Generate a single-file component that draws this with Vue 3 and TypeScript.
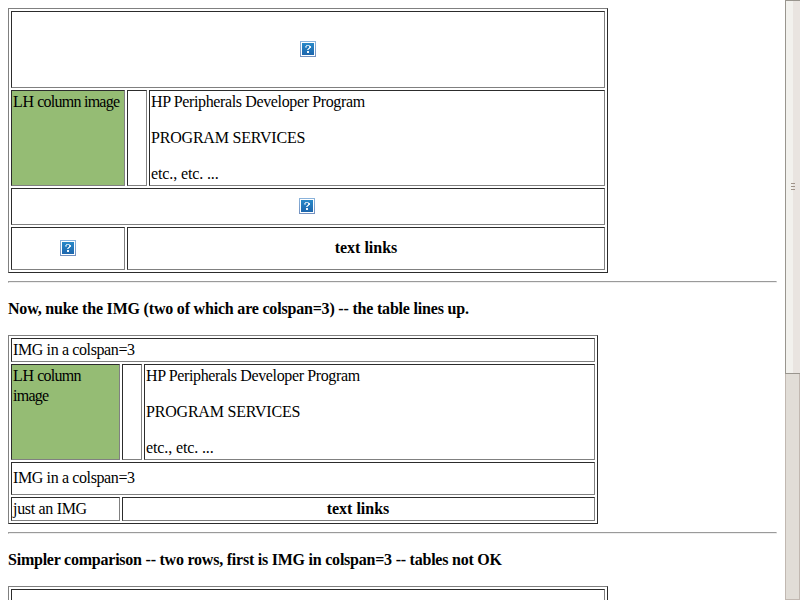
<script setup lang="ts">
import { defineComponent, h } from 'vue'

const MissingImage = defineComponent({
  props: { uid: { type: String, required: true } },
  setup(props) {
    const px = (x: number, y: number, w: number, ht: number, o: number) =>
      h('rect', { x, y, width: w, height: ht, fill: '#fff', 'fill-opacity': o })
    return () =>
      h('svg', { width: 16, height: 16, viewBox: '0 0 16 16', 'shape-rendering': 'crispEdges' }, [
        h('defs', [
          h('linearGradient', { id: props.uid + 'a', x1: 0, y1: 0, x2: 0, y2: 1 }, [
            h('stop', { offset: 0, 'stop-color': '#8bb4dc' }),
            h('stop', { offset: 1, 'stop-color': '#7290bf' }),
          ]),
          h('linearGradient', { id: props.uid + 'b', x1: 0, y1: 0, x2: 0, y2: 1 }, [
            h('stop', { offset: 0, 'stop-color': '#2788c8' }),
            h('stop', { offset: 1, 'stop-color': '#1d66ad' }),
          ]),
        ]),
        h('rect', { width: 16, height: 16, fill: `url(#${props.uid}a)` }),
        h('rect', { x: 1, y: 1, width: 14, height: 14, fill: '#fff' }),
        h('rect', { x: 2, y: 2, width: 12, height: 12, fill: `url(#${props.uid}b)` }),
        px(5, 5, 1, 1, 0.6),
        px(6, 4, 3, 1, 0.7),
        px(9, 4, 1, 1, 0.5),
        px(5, 6, 2, 1, 0.4),
        px(6, 5, 1, 1, 0.6),
        px(9, 5, 2, 2, 0.9),
        px(8, 7, 2, 1, 0.8),
        px(7, 8, 2, 1, 0.7),
        px(7, 10, 2, 2, 0.95),
      ])
  },
})

const services: string[] = ['HP Peripherals Developer Program', 'PROGRAM SERVICES', 'etc., etc. ...']
</script>

<template>
  <div class="window">
    <main class="page">
      <div class="table first">
        <div class="cell span center"><MissingImage uid="m1" /></div>
        <div class="cell green"><span class="lh">LH</span> column image</div>
        <div class="cell"></div>
        <div class="cell">
          <p v-for="(s, i) in services" :key="s" :class="'s' + i">{{ s }}</p>
        </div>
        <div class="cell span center nudge"><MissingImage uid="m2" /></div>
        <div class="cell center"><MissingImage uid="m3" /></div>
        <div class="cell wide center"><b>text links</b></div>
      </div>
      <hr />
      <h4 class="lines-up">Now, nuke the IMG (two of which are colspan=3) -- the table lines up.</h4>
      <div class="table second">
        <div class="cell span middle"><span class="img">IMG in a colspan=3</span></div>
        <div class="cell green"><span class="lh">LH</span> column<br />image</div>
        <div class="cell"></div>
        <div class="cell">
          <p v-for="(s, i) in services" :key="s" :class="'s' + i">{{ s }}</p>
        </div>
        <div class="cell span middle tall"><span class="img">IMG in a colspan=3</span></div>
        <div class="cell middle"><span class="just">just an IMG</span></div>
        <div class="cell wide center links"><b>text links</b></div>
      </div>
      <hr />
      <h4 class="simpler">Simpler comparison -- two rows, first is IMG in colspan=3 -- tables not OK</h4>
      <div class="table third">
        <div class="cell span"></div>
      </div>
    </main>
    <aside class="scrollbar">
      <div class="thumb"><i></i><i></i><i></i></div>
      <div class="track"></div>
    </aside>
  </div>
</template>

<style>
body {
  margin: 0;
  background: #fff;
}
</style>

<style scoped>
.window {
  display: flex;
  width: 800px;
  height: 600px;
  overflow: hidden;
  background: #fff;
  color: #000;
  font: 16px/20px 'Liberation Serif', 'Times New Roman', serif;
}
.page {
  box-sizing: border-box;
  flex: 1;
  padding: 8px 8px 0;
}
.table {
  box-sizing: border-box;
  display: grid;
  gap: 2px;
  padding: 2px;
  border: 1px solid;
  border-color: #808080 #2c2c2c #2c2c2c #808080;
}
.first {
  width: 600px;
  grid-template: 77px 96px 37px 43px / 114px 20px 456px;
}
.second {
  width: 590px;
  grid-template: 24px 96px 33px 24px / 109px 20px 451px;
}
.third {
  width: 600px;
  grid-template: 77px / 114px 20px 456px;
}
.cell {
  box-sizing: border-box;
  min-width: 0;
  min-height: 0;
  padding: 1px;
  border: 1px solid;
  border-color: #2c2c2c #808080 #808080 #2c2c2c;
  white-space: nowrap;
}
.span {
  grid-column: 1 / -1;
}
.wide {
  grid-column: span 2;
}
.center {
  display: flex;
  align-items: center;
  justify-content: center;
}
.first .center,
.tall {
  padding-bottom: 2px;
}
.cell.nudge {
  padding-right: 3px;
}
.links {
  padding-right: 2px;
}
.middle {
  display: flex;
  align-items: center;
}
.green {
  background: #95bc74;
  letter-spacing: -0.75px;
}
.lh {
  letter-spacing: -0.2px;
}
p {
  margin: 0 0 16px;
}
.s0 {
  letter-spacing: -0.37px;
}
.s1 {
  letter-spacing: -0.2px;
}
.s2 {
  letter-spacing: -0.12px;
}
.img {
  letter-spacing: -0.38px;
}
.just {
  letter-spacing: -0.32px;
}
hr {
  box-sizing: border-box;
  height: 2px;
  margin: 8px 0 0;
  border: 1px solid;
  border-color: #9a9a9a #eee #eee #9a9a9a;
}
h4 {
  margin: 16px 0;
  font-size: 16px;
  line-height: 20px;
  white-space: nowrap;
}
.lines-up {
  letter-spacing: -0.195px;
}
.simpler {
  letter-spacing: -0.23px;
}
.scrollbar {
  display: flex;
  flex-direction: column;
  width: 15px;
}
.thumb {
  box-sizing: border-box;
  display: flex;
  flex-direction: column;
  align-items: center;
  justify-content: center;
  gap: 2px;
  height: 374px;
  padding-bottom: 1px;
  border: 1px solid #99958e;
  border-right: 0;
  background: linear-gradient(90deg, #f2f1ed 7px, #e9e4e0 7px);
}
.thumb i {
  width: 4px;
  height: 1px;
  background: #9f9389;
}
.track {
  box-sizing: border-box;
  flex: 1;
  border: 1px solid #c1b8b1;
  border-top: 0;
  background: #e1ddd7;
}
</style>
